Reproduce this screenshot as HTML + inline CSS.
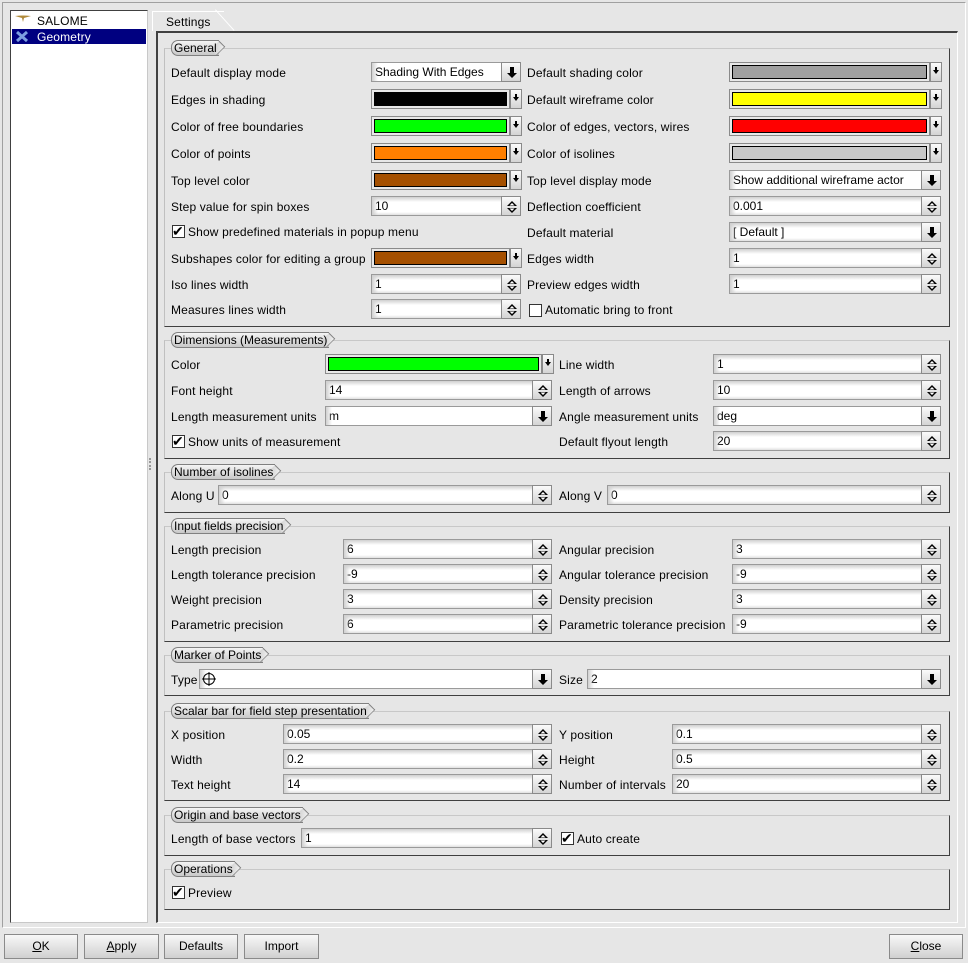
<!DOCTYPE html><html><head><meta charset="utf-8"><style>
*{box-sizing:border-box;margin:0;padding:0}
body{width:968px;height:963px;background:#e6e6e6;font:12px "Liberation Sans",sans-serif;color:#000;position:relative;overflow:hidden}
div,span{position:absolute}
.l{white-space:nowrap;line-height:14px;letter-spacing:.15px}
.f{height:20px;border:1px solid #9a9a9a;border-right:none;background:linear-gradient(#cfcfcf,#fff 5px,#fff 15px,#e0e0e0);padding-left:3px;line-height:18px;white-space:nowrap}
.f:before{content:"";position:absolute;left:0;top:0;bottom:0;width:6px;background:linear-gradient(90deg,#d0d0d0,rgba(255,255,255,0))}
.b{height:20px;width:20px;border:1px solid #8a8a8a;background:linear-gradient(#fafafa,#d4d4d4);}
.b svg{position:absolute;left:3px;top:3px}
.c{height:20px;border:1px solid #8a8a8a;background:#e8e8e8;padding:2px}
.c i{display:block;position:absolute;left:2px;top:2px;right:2px;bottom:2px;border:1px solid #000}
.cb{height:20px;width:12px;border:1px solid #8a8a8a;background:linear-gradient(#fafafa,#d4d4d4)}
.cb:after{content:"";position:absolute;left:2px;top:7px;border:3px solid transparent;border-top:4px solid #000}
.cb:before{content:"";position:absolute;left:4px;top:4px;width:2px;height:4px;background:#000}
.g{left:164px;width:786px;border:1px solid #c8c8c8;border-right-color:#404040;border-bottom:1px solid #404040;border-left-color:#c0c0c0}
.t{height:16px;line-height:14px;padding:0 2px 0 2px;border:1px solid #808080;border-right:none;border-radius:7px 0 0 7px;background:linear-gradient(#f4f4f4,#c8c8c8);white-space:nowrap}
.t:after{content:"";position:absolute;right:-5px;top:1px;width:11px;height:11px;transform:rotate(45deg) scaleX(.7);border-top:1px solid #808080;border-right:1px solid #808080;background:linear-gradient(45deg,#c8c8c8,#f0f0f0)}
.t b{position:relative;z-index:1;font-weight:normal}
.k{width:13px;height:13px;border:1px solid #333;background:#fff}
.btn{top:934px;height:25px;border:1px solid #8a8a8a;background:linear-gradient(#f8f8f8,#d0d0d0);text-align:center;line-height:23px}
</style></head><body>
<svg width="0" height="0" style="position:absolute"><defs>
<symbol id="sp" viewBox="0 0 14 14"><path d="M7 1L2 6H12Z" fill="#000"/><path d="M7 13L2 8H12Z" fill="#000"/><path d="M7 3L4.5 5.5H9.5Z" fill="#fff"/><path d="M7 11L4.5 8.5H9.5Z" fill="#fff"/></symbol>
<symbol id="dn" viewBox="0 0 14 14"><path d="M5 1H9V7H12L7 12L2 7H5Z" fill="#000"/></symbol>
</defs></svg>
<div style="left:2px;top:2px;width:964px;height:926px;border:1px solid #a0a0a0;border-right-color:#fff;border-bottom-color:#fff"></div>
<div style="left:10px;top:10px;width:138px;height:913px;background:#fff;border:1px solid #404040;border-right-color:#c8c8c8;border-bottom-color:#c8c8c8"></div>
<div style="left:12px;top:29px;width:134px;height:15px;background:#000080"></div>
<svg style="position:absolute;left:14px;top:14px" width="18" height="10"><path d="M1 2Q9 1 17 2L10 4L9 8L8 4Z" fill="#b08a3a"/></svg>
<svg style="position:absolute;left:16px;top:31px" width="12" height="11"><path d="M1 1L11 10M11 1L1 10" stroke="#7c9ee0" stroke-width="3"/></svg>
<div class="l" style="left:37px;top:14px">SALOME</div>
<div class="l" style="left:37px;top:30px;color:#fff">Geometry</div>
<div style="left:149px;top:458px;width:2px;height:12px;border-left:2px dotted #999"></div>
<div style="left:152px;top:11px;width:72px;height:20px;background:#e6e6e6;border:1px solid #fff;border-bottom:none;border-right:none"></div>
<div style="left:215px;top:10px;width:1px;height:28px;background:#fff;transform:rotate(-42deg);transform-origin:0 0"></div>
<div class="l" style="left:166px;top:15px">Settings</div>
<div style="left:156px;top:31px;width:802px;height:892px;border:2px solid #404040;border-right:1px solid #fff;border-bottom:1px solid #fff"></div>

<div class="g" style="top:48px;height:279px"></div>
<div class="t" style="left:171px;top:40px"><b>General</b></div>
<div class="l" style="left:171px;top:66px">Default display mode</div>
<div class="l" style="left:171px;top:93px">Edges in shading</div>
<div class="l" style="left:171px;top:120px">Color of free boundaries</div>
<div class="l" style="left:171px;top:147px">Color of points</div>
<div class="l" style="left:171px;top:174px">Top level color</div>
<div class="l" style="left:171px;top:200px">Step value for spin boxes</div>
<div class="k" style="left:172px;top:225px"></div><div class="l" style="left:172px;top:224px;font-size:14px;line-height:14px">&#10004;</div>
<div class="l" style="left:188px;top:225px">Show predefined materials in popup menu</div>
<div class="l" style="left:171px;top:252px">Subshapes color for editing a group</div>
<div class="l" style="left:171px;top:278px">Iso lines width</div>
<div class="l" style="left:171px;top:303px">Measures lines width</div>

<div class="f" style="left:371px;top:62px;width:130px;background:#fff">Shading With Edges</div><div class="b" style="left:501px;top:62px"><svg width="14" height="14"><use href="#dn"/></svg></div>
<div class="c" style="left:371px;top:89px;width:139px"><i style="background:#000"></i></div><div class="cb" style="left:510px;top:89px"></div>
<div class="c" style="left:371px;top:116px;width:139px"><i style="background:#00ff00"></i></div><div class="cb" style="left:510px;top:116px"></div>
<div class="c" style="left:371px;top:143px;width:139px"><i style="background:#ff7f00"></i></div><div class="cb" style="left:510px;top:143px"></div>
<div class="c" style="left:371px;top:170px;width:139px"><i style="background:#a55000"></i></div><div class="cb" style="left:510px;top:170px"></div>
<div class="f" style="left:371px;top:196px;width:130px">10</div><div class="b" style="left:501px;top:196px"><svg width="14" height="14"><use href="#sp"/></svg></div>
<div class="c" style="left:371px;top:248px;width:139px"><i style="background:#a55000"></i></div><div class="cb" style="left:510px;top:248px"></div>
<div class="f" style="left:371px;top:274px;width:130px">1</div><div class="b" style="left:501px;top:274px"><svg width="14" height="14"><use href="#sp"/></svg></div>
<div class="f" style="left:371px;top:299px;width:130px">1</div><div class="b" style="left:501px;top:299px"><svg width="14" height="14"><use href="#sp"/></svg></div>

<div class="l" style="left:527px;top:66px">Default shading color</div>
<div class="l" style="left:527px;top:93px">Default wireframe color</div>
<div class="l" style="left:527px;top:120px">Color of edges, vectors, wires</div>
<div class="l" style="left:527px;top:147px">Color of isolines</div>
<div class="l" style="left:527px;top:174px">Top level display mode</div>
<div class="l" style="left:527px;top:200px">Deflection coefficient</div>
<div class="l" style="left:527px;top:226px">Default material</div>
<div class="l" style="left:527px;top:252px">Edges width</div>
<div class="l" style="left:527px;top:278px">Preview edges width</div>
<div class="k" style="left:529px;top:304px"></div>
<div class="l" style="left:545px;top:303px">Automatic bring to front</div>

<div class="c" style="left:729px;top:62px;width:201px"><i style="background:#a0a0a0"></i></div><div class="cb" style="left:930px;top:62px"></div>
<div class="c" style="left:729px;top:89px;width:201px"><i style="background:#ffff00"></i></div><div class="cb" style="left:930px;top:89px"></div>
<div class="c" style="left:729px;top:116px;width:201px"><i style="background:#ff0000"></i></div><div class="cb" style="left:930px;top:116px"></div>
<div class="c" style="left:729px;top:143px;width:201px"><i style="background:#c8c8c8"></i></div><div class="cb" style="left:930px;top:143px"></div>
<div class="f" style="left:729px;top:170px;width:192px;background:#fff">Show additional wireframe actor</div><div class="b" style="left:921px;top:170px"><svg width="14" height="14"><use href="#dn"/></svg></div>
<div class="f" style="left:729px;top:196px;width:192px">0.001</div><div class="b" style="left:921px;top:196px"><svg width="14" height="14"><use href="#sp"/></svg></div>
<div class="f" style="left:729px;top:222px;width:192px">[ Default ]</div><div class="b" style="left:921px;top:222px"><svg width="14" height="14"><use href="#dn"/></svg></div>
<div class="f" style="left:729px;top:248px;width:192px">1</div><div class="b" style="left:921px;top:248px"><svg width="14" height="14"><use href="#sp"/></svg></div>
<div class="f" style="left:729px;top:274px;width:192px">1</div><div class="b" style="left:921px;top:274px"><svg width="14" height="14"><use href="#sp"/></svg></div>

<div class="g" style="top:340px;height:119px"></div>
<div class="t" style="left:171px;top:332px"><b>Dimensions (Measurements)</b></div>
<div class="l" style="left:171px;top:358px">Color</div>
<div class="l" style="left:171px;top:384px">Font height</div>
<div class="l" style="left:171px;top:410px">Length measurement units</div>
<div class="k" style="left:172px;top:435px"></div><div class="l" style="left:172px;top:434px;font-size:14px">&#10004;</div>
<div class="l" style="left:188px;top:435px">Show units of measurement</div>
<div class="c" style="left:325px;top:354px;width:217px"><i style="background:#00ff00"></i></div><div class="cb" style="left:542px;top:354px"></div>
<div class="f" style="left:325px;top:380px;width:207px">14</div><div class="b" style="left:532px;top:380px"><svg width="14" height="14"><use href="#sp"/></svg></div>
<div class="f" style="left:325px;top:406px;width:207px;background:#fff">m</div><div class="b" style="left:532px;top:406px"><svg width="14" height="14"><use href="#dn"/></svg></div>
<div class="l" style="left:559px;top:358px">Line width</div>
<div class="l" style="left:559px;top:384px">Length of arrows</div>
<div class="l" style="left:559px;top:410px">Angle measurement units</div>
<div class="l" style="left:559px;top:435px">Default flyout length</div>
<div class="f" style="left:713px;top:354px;width:208px">1</div><div class="b" style="left:921px;top:354px"><svg width="14" height="14"><use href="#sp"/></svg></div>
<div class="f" style="left:713px;top:380px;width:208px">10</div><div class="b" style="left:921px;top:380px"><svg width="14" height="14"><use href="#sp"/></svg></div>
<div class="f" style="left:713px;top:406px;width:208px;background:#fff">deg</div><div class="b" style="left:921px;top:406px"><svg width="14" height="14"><use href="#dn"/></svg></div>
<div class="f" style="left:713px;top:431px;width:208px">20</div><div class="b" style="left:921px;top:431px"><svg width="14" height="14"><use href="#sp"/></svg></div>

<div class="g" style="top:472px;height:41px"></div>
<div class="t" style="left:171px;top:464px"><b>Number of isolines</b></div>
<div class="l" style="left:171px;top:489px">Along U</div>
<div class="f" style="left:218px;top:485px;width:314px">0</div><div class="b" style="left:532px;top:485px"><svg width="14" height="14"><use href="#sp"/></svg></div>
<div class="l" style="left:559px;top:489px">Along V</div>
<div class="f" style="left:607px;top:485px;width:314px">0</div><div class="b" style="left:921px;top:485px"><svg width="14" height="14"><use href="#sp"/></svg></div>

<div class="g" style="top:526px;height:116px"></div>
<div class="t" style="left:171px;top:518px"><b>Input fields precision</b></div>
<div class="l" style="left:171px;top:543px">Length precision</div>
<div class="l" style="left:171px;top:568px">Length tolerance precision</div>
<div class="l" style="left:171px;top:593px">Weight precision</div>
<div class="l" style="left:171px;top:618px">Parametric precision</div>
<div class="f" style="left:343px;top:539px;width:189px">6</div><div class="b" style="left:532px;top:539px"><svg width="14" height="14"><use href="#sp"/></svg></div>
<div class="f" style="left:343px;top:564px;width:189px">-9</div><div class="b" style="left:532px;top:564px"><svg width="14" height="14"><use href="#sp"/></svg></div>
<div class="f" style="left:343px;top:589px;width:189px">3</div><div class="b" style="left:532px;top:589px"><svg width="14" height="14"><use href="#sp"/></svg></div>
<div class="f" style="left:343px;top:614px;width:189px">6</div><div class="b" style="left:532px;top:614px"><svg width="14" height="14"><use href="#sp"/></svg></div>
<div class="l" style="left:559px;top:543px">Angular precision</div>
<div class="l" style="left:559px;top:568px">Angular tolerance precision</div>
<div class="l" style="left:559px;top:593px">Density precision</div>
<div class="l" style="left:559px;top:618px">Parametric tolerance precision</div>
<div class="f" style="left:732px;top:539px;width:189px">3</div><div class="b" style="left:921px;top:539px"><svg width="14" height="14"><use href="#sp"/></svg></div>
<div class="f" style="left:732px;top:564px;width:189px">-9</div><div class="b" style="left:921px;top:564px"><svg width="14" height="14"><use href="#sp"/></svg></div>
<div class="f" style="left:732px;top:589px;width:189px">3</div><div class="b" style="left:921px;top:589px"><svg width="14" height="14"><use href="#sp"/></svg></div>
<div class="f" style="left:732px;top:614px;width:189px">-9</div><div class="b" style="left:921px;top:614px"><svg width="14" height="14"><use href="#sp"/></svg></div>

<div class="g" style="top:655px;height:41px"></div>
<div class="t" style="left:171px;top:647px"><b>Marker of Points</b></div>
<div class="l" style="left:171px;top:673px">Type</div>
<div class="f" style="left:199px;top:669px;width:333px;background:#fff"><svg width="14" height="14" style="position:absolute;left:2px;top:2px"><circle cx="7" cy="7" r="5.5" fill="none" stroke="#000"/><path d="M7 0V14M0 7H14" stroke="#000"/></svg></div><div class="b" style="left:532px;top:669px"><svg width="14" height="14"><use href="#dn"/></svg></div>
<div class="l" style="left:559px;top:673px">Size</div>
<div class="f" style="left:587px;top:669px;width:334px;background:#fff">2</div><div class="b" style="left:921px;top:669px"><svg width="14" height="14"><use href="#dn"/></svg></div>

<div class="g" style="top:711px;height:90px"></div>
<div class="t" style="left:171px;top:703px"><b>Scalar bar for field step presentation</b></div>
<div class="l" style="left:171px;top:728px">X position</div>
<div class="l" style="left:171px;top:753px">Width</div>
<div class="l" style="left:171px;top:778px">Text height</div>
<div class="f" style="left:283px;top:724px;width:249px">0.05</div><div class="b" style="left:532px;top:724px"><svg width="14" height="14"><use href="#sp"/></svg></div>
<div class="f" style="left:283px;top:749px;width:249px">0.2</div><div class="b" style="left:532px;top:749px"><svg width="14" height="14"><use href="#sp"/></svg></div>
<div class="f" style="left:283px;top:774px;width:249px">14</div><div class="b" style="left:532px;top:774px"><svg width="14" height="14"><use href="#sp"/></svg></div>
<div class="l" style="left:559px;top:728px">Y position</div>
<div class="l" style="left:559px;top:753px">Height</div>
<div class="l" style="left:559px;top:778px">Number of intervals</div>
<div class="f" style="left:672px;top:724px;width:249px">0.1</div><div class="b" style="left:921px;top:724px"><svg width="14" height="14"><use href="#sp"/></svg></div>
<div class="f" style="left:672px;top:749px;width:249px">0.5</div><div class="b" style="left:921px;top:749px"><svg width="14" height="14"><use href="#sp"/></svg></div>
<div class="f" style="left:672px;top:774px;width:249px">20</div><div class="b" style="left:921px;top:774px"><svg width="14" height="14"><use href="#sp"/></svg></div>

<div class="g" style="top:815px;height:41px"></div>
<div class="t" style="left:171px;top:807px"><b>Origin and base vectors</b></div>
<div class="l" style="left:171px;top:832px">Length of base vectors</div>
<div class="f" style="left:301px;top:828px;width:231px">1</div><div class="b" style="left:532px;top:828px"><svg width="14" height="14"><use href="#sp"/></svg></div>
<div class="k" style="left:561px;top:832px"></div><div class="l" style="left:561px;top:831px;font-size:14px">&#10004;</div>
<div class="l" style="left:577px;top:832px">Auto create</div>

<div class="g" style="top:869px;height:41px"></div>
<div class="t" style="left:171px;top:861px"><b>Operations</b></div>
<div class="k" style="left:172px;top:886px"></div><div class="l" style="left:172px;top:885px;font-size:14px">&#10004;</div>
<div class="l" style="left:188px;top:886px">Preview</div>

<div class="btn" style="left:4px;width:74px"><u>O</u>K</div>
<div class="btn" style="left:84px;width:75px"><u>A</u>pply</div>
<div class="btn" style="left:164px;width:74px">Defaults</div>
<div class="btn" style="left:244px;width:75px">Import</div>
<div class="btn" style="left:889px;width:74px"><u>C</u>lose</div>
</body></html>
